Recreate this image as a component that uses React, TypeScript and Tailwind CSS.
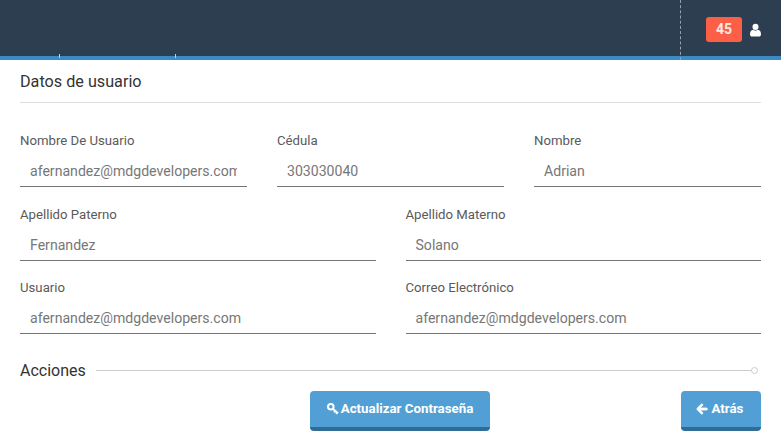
import { FaArrowLeft } from 'react-icons/fa';

function Field({ label, value }: { label: string; value: string }) {
  return (
    <div className="flex flex-col">
      <label className="h-[20px] text-[13.2px] leading-[20px] font-normal text-[#5a5a5a]">{label}</label>
      <input
        readOnly
        value={value}
        className="mt-[6px] h-[30px] w-full border-b border-[#757575] px-[10px] pb-[2px] text-[14.1px] text-[#777777] outline-none"
      />
    </div>
  );
}

function UserIcon() {
  return (
    <svg className="ml-[8px] h-[14px] w-[11px] text-white" viewBox="0 0 12 14" fill="currentColor">
      <circle cx="6" cy="3.6" r="3.3" />
      <path d="M0 11.8C0 8.8 1.2 7 3.4 6.8 4.6 8 7.4 8 8.6 6.8 10.8 7 12 8.8 12 11.8 12 13.2 11 14 10 14H2C1 14 0 13.2 0 11.8Z" />
    </svg>
  );
}

function KeyIcon() {
  return (
    <svg className="h-[12px] w-[12px]" viewBox="0 0 12 12" fill="none" stroke="currentColor">
      <circle cx="3.8" cy="3.8" r="2.8" strokeWidth="2" />
      <path d="M5.8 5.8 11 10.2M8.2 7.8 7 9.4M10.2 9.4 9.2 11" strokeWidth="1.9" />
    </svg>
  );
}

export default function App() {
  return (
    <div className="h-[442px] w-[781px] overflow-hidden bg-white font-['Roboto',sans-serif]">
      {/* Header */}
      <header className="relative flex h-[60px] items-center justify-end border-b-[4px] border-[#3a8ac4] bg-[#2c3e50] pt-[3px] pr-[20px]">
        <div className="absolute top-0 left-[680px] h-[60px] border-l border-dashed border-[#8fa3b5]" />
        <div className="absolute top-[54px] left-[59px] h-[4px] w-px bg-[#b8d4e8]" />
        <div className="absolute top-[54px] left-[175px] h-[4px] w-px bg-[#b8d4e8]" />
        <span className="flex h-[25px] w-[36px] items-center justify-center rounded-[3px] bg-[#fc5f45] text-[14px] font-bold text-[#fbe9e5]">
          45
        </span>
        <UserIcon />
      </header>

      <main className="px-[20px]">
        {/* Datos */}
        <h2 className="flex h-[43px] items-center border-b border-[#dddddd] pt-[2px] text-[16.2px] font-normal text-[#333333]">
          Datos de usuario
        </h2>

        <div className="mt-[28px] grid grid-cols-3 gap-x-[30px]">
          <Field label="Nombre De Usuario" value="afernandez@mdgdevelopers.com" />
          <Field label="Cédula" value="303030040" />
          <Field label="Nombre" value="Adrian" />
        </div>
        <div className="mt-[18px] grid grid-cols-2 gap-x-[30px]">
          <Field label="Apellido Paterno" value="Fernandez" />
          <Field label="Apellido Materno" value="Solano" />
        </div>
        <div className="mt-[17px] grid grid-cols-2 gap-x-[30px]">
          <Field label="Usuario" value="afernandez@mdgdevelopers.com" />
          <Field label="Correo Electrónico" value="afernandez@mdgdevelopers.com" />
        </div>

        {/* Acciones */}
        <div className="mt-[27px] flex items-center">
          <span className="text-[16px] leading-[20px] text-[#333333]">Acciones</span>
          <div className="mb-[2px] ml-[10px] h-px flex-1 bg-[#cccccc]" />
          <div className="mr-[3px] mb-[2px] h-[7px] w-[7px] rounded-full border border-[#cccccc]" />
        </div>

        <div className="mt-[10px] flex justify-end gap-[191px]">
          <button className="flex h-[40px] w-[180px] items-center justify-center gap-[2px] rounded-[4px] border-b-[4px] border-[#2f6d96] bg-[#519fd4] text-[13.3px] font-bold text-white">
            <KeyIcon />
            Actualizar Contraseña
          </button>
          <button className="flex h-[40px] w-[80px] items-center justify-center gap-[4px] rounded-[4px] border-b-[4px] border-[#2f6d96] bg-[#519fd4] pr-[3px] text-[13.3px] font-bold text-white">
            <FaArrowLeft className="text-[12px] stroke-[40px]" />
            Atrás
          </button>
        </div>
      </main>
    </div>
  );
}
